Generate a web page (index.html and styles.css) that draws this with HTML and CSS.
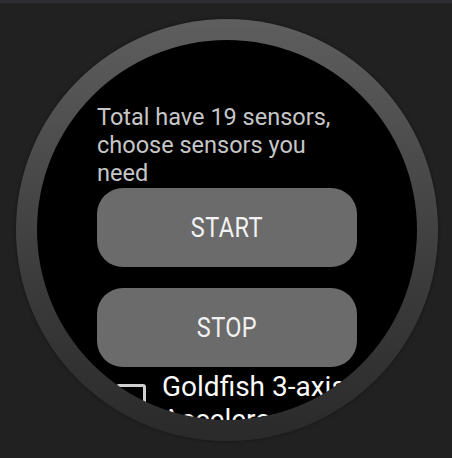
FILE: index.html
```html
<!DOCTYPE html>
<html>
<head>
<meta charset="utf-8">
<link rel="stylesheet" href="styles.css">
</head>
<body>
<div class="topbar"></div>
<div class="stage">
  <div class="watch">
    <div class="screen">
      <div class="content">
        <p class="intro">Total have 19 sensors, choose sensors you need</p>
        <div class="btn"><span class="btn-label">START</span></div>
        <div class="btn"><span class="btn-label">STOP</span></div>
        <div class="sensor">
          <div class="checkbox"></div>
          <div class="sensor-name">Goldfish 3-axis Accelerometer</div>
        </div>
      </div>
    </div>
  </div>
</div>
</body>
</html>
```
FILE: styles.css
```css
html, body {
  margin: 0;
  padding: 0;
}
body {
  background: #212121;
  width: 452px;
  height: 458px;
  overflow: hidden;
  font-family: Roboto, "Noto Sans", sans-serif;
}
.topbar {
  height: 3px;
  background: #2c2e31;
}
.stage {
  padding: 16px 0 0 16px;
}
.watch {
  width: 422px;
  height: 422px;
  box-sizing: border-box;
  padding: 21px;
  border-radius: 50%;
  background: linear-gradient(to bottom, #5e5e5e 0%, #4a4a4a 35%, #3a3a3a 65%, #2a2a2a 100%);
  box-shadow: 0 0 3px 1px rgba(0,0,0,0.25);
}
.screen {
  width: 380px;
  height: 380px;
  border-radius: 50%;
  background: #000;
  overflow: hidden;
}
.content {
  padding: 63px 60px 0 60px;
}
.intro {
  margin: 0;
  color: #c6c6c6;
  font-size: 23.5px;
  line-height: 28px;
}
.btn {
  margin-top: 1px;
  height: 79px;
  border-radius: 26px;
  background: #6b6b6b;
  display: flex;
  align-items: center;
  justify-content: center;
}
.btn + .btn {
  margin-top: 21px;
}
.btn-label {
  display: inline-block;
  color: #f2f2f2;
  font-size: 28px;
  letter-spacing: 0.5px;
  transform: scaleX(0.84);
}
.sensor {
  display: flex;
  align-items: flex-start;
  gap: 16px;
  padding: 3px 0 0 19px;
}
.checkbox {
  flex: none;
  width: 24px;
  height: 24px;
  margin-top: 14px;
  border: 3px solid #cfcfcf;
  border-radius: 3px;
}
.sensor-name {
  color: #fafafa;
  font-size: 28px;
  line-height: 33px;
  width: 220px;
}
```
